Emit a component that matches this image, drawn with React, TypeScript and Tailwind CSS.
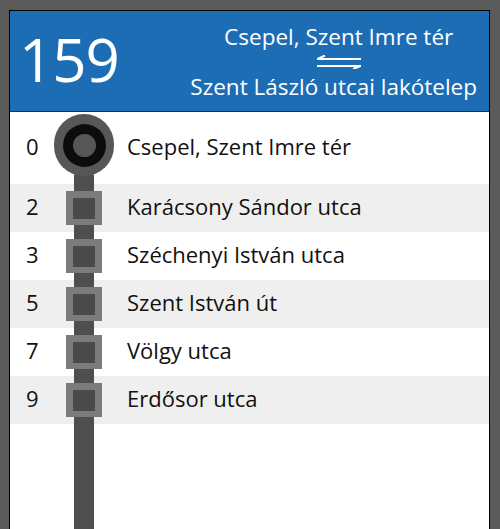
const stops = [
  { min: 2, name: "Karácsony Sándor utca" },
  { min: 3, name: "Széchenyi István utca" },
  { min: 5, name: "Szent István út" },
  { min: 7, name: "Völgy utca" },
  { min: 9, name: "Erdősor utca" },
];

const font = { fontFamily: '"Open Sans", "Liberation Sans", sans-serif' };

function Harpoons() {
  return (
    <svg width="46" height="14" viewBox="0 0 46 14" fill="none">
      <path d="M1 4H45M1.5 4L9 0.5" stroke="white" strokeWidth="2" />
      <path d="M1 11H45M44.5 11L37 14" stroke="white" strokeWidth="2" />
    </svg>
  );
}

const App = () => {
  return (
    <div className="h-[529px] w-[500px] overflow-hidden bg-[#5a5a5a] pt-[10px] pl-[9px] pr-[10px]" style={font}>
      <div className="flex h-[530px] flex-col border border-black bg-white">
        {/* header */}
        <div className="flex h-[101px] items-center justify-between border-b border-[#1a3550] bg-[#1d6db5] pl-[9px] pr-[12px] text-white">
          <span className="mt-[-4px] text-[60px] leading-none tracking-[-1px]">159</span>
          <div className="flex flex-col items-center pt-[1px] text-[22.5px] leading-[26px]">
            <span className="pl-[10px]">Csepel, Szent Imre tér</span>
            <div className="my-[5px] pl-[10px]">
              <Harpoons />
            </div>
            <span>Szent László utcai lakótelep</span>
          </div>
        </div>

        {/* stop list */}
        <div className="relative flex-1 text-[22px] text-[#111]">
          <div className="absolute top-[58px] bottom-0 left-[64px] w-[20px] rounded-t-[6px] bg-[#4f4f4f]" />

          <div className="relative flex h-[72px] items-center">
            <span className="mt-[-3px] w-[44px] pl-[16px]">0</span>
            <div className="flex w-[60px] justify-center">
              <div className="mt-[-6px] flex h-[62px] w-[62px] items-center justify-center rounded-full bg-[#575757]">
                <div className="flex h-[43px] w-[43px] items-center justify-center rounded-full bg-[#0c0c0c]">
                  <div className="h-[23px] w-[23px] rounded-full bg-[#575757]" />
                </div>
              </div>
            </div>
            <span className="mt-[-3px] ml-[13px]">Csepel, Szent Imre tér</span>
          </div>

          {stops.map((s, i) => (
            <div
              key={s.min}
              className={`flex h-[48px] items-center ${i % 2 === 0 ? "bg-[#efefef]" : ""}`}
            >
              <span className="mt-[-3px] w-[44px] pl-[16px]">{s.min}</span>
              <div className="relative flex w-[60px] justify-center">
                <div className="flex h-[34px] w-[36px] items-center justify-center bg-[#7b7b7b]">
                  <div className="h-[21px] w-[22px] bg-[#4a4a4a]" />
                </div>
              </div>
              <span className="mt-[-3px] ml-[13px]">{s.name}</span>
            </div>
          ))}
        </div>
      </div>
    </div>
  );
};

export default App;
